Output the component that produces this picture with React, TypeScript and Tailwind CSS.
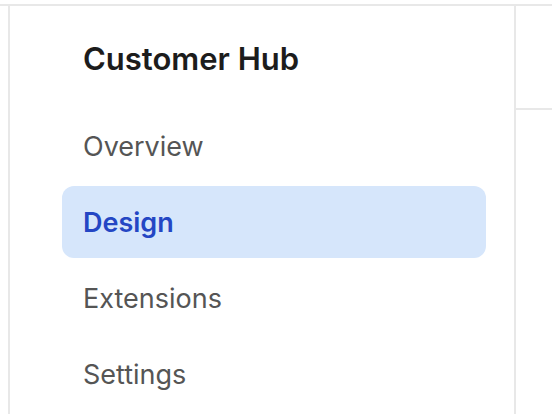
const navItems = ['Overview', 'Design', 'Extensions', 'Settings']

export default function App() {
  const active = 'Design'

  return (
    <div className="bg-white pt-1 w-[552px] h-[418px] overflow-hidden" style={{ fontFamily: 'Inter, "Noto Sans", sans-serif' }}>
      <div className="flex h-[410px] border-t-2 border-[#e8e8e8]">
        {/* left rail */}
        <div className="w-[10px] shrink-0 border-r-2 border-[#e8e8e8]" />

        {/* sidebar */}
        <aside className="w-[506px] shrink-0 border-r-2 border-[#e8e8e8] pl-[52px] pr-[28px] pt-[35px]">
          <h1 className="pl-[21px] h-[36px] text-[31px] leading-[36px] font-semibold text-[#1c1c1c]">
            Customer Hub
          </h1>
          <nav className="mt-[33px] flex flex-col gap-1">
            {navItems.map((item) => (
              <a
                key={item}
                href="#"
                className={
                  item === active
                    ? 'flex items-center h-[72px] pl-[21px] pt-[2px] rounded-xl bg-[#d6e6fb] text-[#2446c4] font-semibold text-[27px]'
                    : 'flex items-center h-[72px] pl-[21px] pt-[2px] rounded-xl text-[#555555] text-[27px]'
                }
              >
                {item}
              </a>
            ))}
          </nav>
        </aside>

        {/* main */}
        <main className="flex-1">
          <div className="h-[104px] border-b-2 border-[#e8e8e8]" />
        </main>
      </div>
    </div>
  )
}
